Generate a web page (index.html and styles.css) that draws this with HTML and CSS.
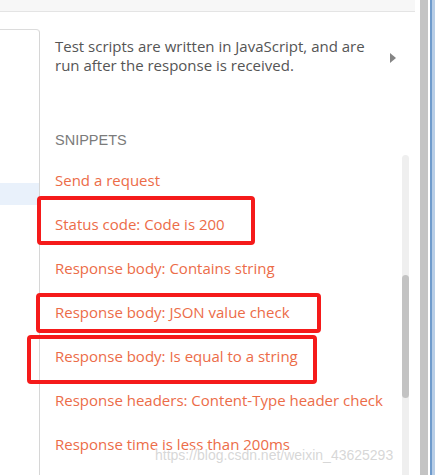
FILE: index.html
```html
<!DOCTYPE html>
<html>
<head>
<meta charset="utf-8">
<link rel="stylesheet" href="styles.css">
</head>
<body>
<div class="app">
  <div class="main">
    <div class="topbar"></div>
    <div class="content">
      <div class="editor">
        <div class="editor-line"></div>
      </div>
      <div class="side">
        <div class="desc-row">
          <p class="desc">Test scripts are written in JavaScript, and are run after the response is received.</p>
          <span class="caret"></span>
        </div>
        <div class="heading">SNIPPETS</div>
        <div class="snippets">
          <ul class="list">
            <li>Send a request</li>
            <li>Status code: Code is 200</li>
            <li>Response body: Contains string</li>
            <li>Response body: JSON value check</li>
            <li>Response body: Is equal to a string</li>
            <li>Response headers: Content-Type header check</li>
            <li>Response time is less than 200ms</li>
          </ul>
          <div class="scrollbar"><div class="thumb"></div></div>
        </div>
      </div>
    </div>
  </div>
  <div class="spacer"></div>
  <div class="gutter"></div>
  <div class="edge"></div>
</div>
<div class="mark mark-1"></div>
<div class="mark mark-2"></div>
<div class="mark mark-3"></div>
<div class="watermark">https://blog.csdn.net/weixin_43625293</div>
</body>
</html>
```
FILE: styles.css
```css
html, body {
  margin: 0;
  padding: 0;
  background: #ffffff;
  overflow: hidden;
}
body {
  width: 435px;
  height: 475px;
  position: relative;
  font-family: "Open Sans", "Noto Sans", sans-serif;
}
.app {
  display: flex;
  height: 475px;
}
.main {
  width: 415px;
  display: flex;
  flex-direction: column;
}
.topbar {
  height: 11px;
  background: #f7f7f7;
  border-bottom: 1px solid #e4e4e4;
  flex: none;
}
.content {
  flex: 1;
  display: flex;
}
.editor {
  width: 39px;
  margin-top: 17px;
  border-top: 1px solid #dcdcdc;
  border-right: 1px solid #d6d6d6;
  border-top-right-radius: 4px;
  padding-top: 153px;
}
.editor-line {
  height: 22px;
  background: #e9f1fb;
}
.side {
  flex: 1;
  padding-left: 15px;
  padding-top: 25px;
  display: flex;
  flex-direction: column;
}
.desc-row {
  display: flex;
  align-items: flex-start;
  padding-right: 19px;
}
.desc {
  margin: 0;
  width: 325px;
  font-size: 15px;
  line-height: 19px;
  color: #555555;
}
.caret {
  margin-left: auto;
  margin-top: 16px;
  width: 0;
  height: 0;
  border-top: 5px solid transparent;
  border-bottom: 5px solid transparent;
  border-left: 6px solid #858585;
}
.heading {
  margin-top: 56px;
  font-family: "Liberation Sans", Arial, sans-serif;
  font-size: 14.5px;
  line-height: 19px;
  color: #7b7b7b;
}
.snippets {
  display: flex;
  margin-top: 5px;
  flex: 1;
}
.list {
  list-style: none;
  margin: 0;
  padding: 3px 0 0 0;
  flex: 1;
}
.list li {
  height: 44px;
  line-height: 44px;
  font-size: 15px;
  color: #ec6c48;
  white-space: nowrap;
}
.scrollbar {
  width: 7px;
  margin-right: 6px;
  background: #efefef;
  border-radius: 4px 4px 0 0;
  padding-top: 120px;
}
.thumb {
  height: 123px;
  background: #c3c3c3;
  border-radius: 4px;
}
.spacer {
  width: 5px;
}
.gutter {
  width: 8px;
  background: #c4c4c4;
}
.edge {
  width: 7px;
  background: linear-gradient(to right, #ffffff 0 2px, #6f9bcc 2px 4px, #b7cde6 4px);
}
.mark {
  position: absolute;
  border: 4px solid #f51a1a;
  border-radius: 4px;
  box-sizing: border-box;
}
.mark-1 { left: 37px; top: 196px; width: 218px; height: 49px; }
.mark-2 { left: 36px; top: 293px; width: 285px; height: 40px; }
.mark-3 { left: 27px; top: 335px; width: 290px; height: 49px; }
.watermark {
  position: absolute;
  left: 155px;
  top: 447px;
  font-family: "Liberation Sans", Arial, sans-serif;
  font-size: 14px;
  color: rgba(205, 205, 205, 0.8);
  text-shadow: 1px 0 0 rgba(255,255,255,0.7), -1px 0 0 rgba(255,255,255,0.7);
  white-space: nowrap;
}
```
